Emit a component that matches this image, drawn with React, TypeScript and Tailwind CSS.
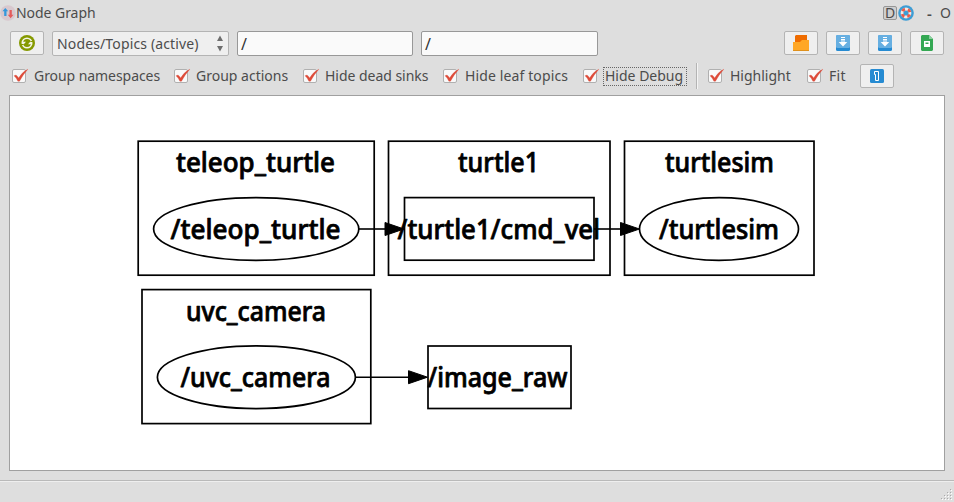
import React from 'react';

const FONT = "font-['Noto_Sans','Open_Sans',sans-serif]";

function Check({ label, width, spacing, focused = false }: { label: string; width: string; spacing: string; focused?: boolean }) {
  return (
    <label className={`relative flex h-[26px] shrink-0 items-center ${width}`}>
      <span className="h-[14px] w-[14px] shrink-0 rounded-[2px] border border-[#b0b0b0] bg-[#f9f9f9]" />
      <svg className="absolute left-0 top-[4px]" width="18" height="18" viewBox="0 0 18 18">
        <path d="M2 8.800 L4 8 Q5.800 9.300 6.600 11 Q10 5 15.800 2.200 Q10.700 8 7.500 14.200 L5.900 14.200 Q4.600 11 2 8.800Z" fill="#dd4b39" stroke="#dd4b39" strokeWidth=".3" />
      </svg>
      <span
        className={`ml-[6px] flex h-[19px] items-center whitespace-nowrap pl-[2px] ${spacing} ${
          focused ? 'w-[84px] outline-1 -outline-offset-1 outline-dotted outline-[#666]' : ''
        }`}
      >
        {label}
      </span>
    </label>
  );
}

function ToolButton({ children }: { children: React.ReactNode }) {
  return (
    <button className="flex h-[24px] w-[34px] shrink-0 items-center justify-center rounded-[2px] border border-[#b4b4b4] bg-[#efefef]">
      {children}
    </button>
  );
}

function SaveIcon() {
  return (
    <svg width="14" height="16" viewBox="0 0 14 16">
      <rect width="14" height="16" rx="1.5" fill="#268bd2" />
      <path d="M0 1.5Q0 0 1.5 0H12.5Q14 0 14 1.5V11.5Q14 13 12.5 13H1.5Q0 13 0 11.5Z" fill="#67afe1" />
      <path d="M5 2h4v1H5zM5 4h4v1.5H5zM5 6.5h4V7h2.3L7 11.5 2.7 7H5z" fill="#fff" />
    </svg>
  );
}

function GraphText({ x, y, width, children }: { x: number; y: number; width: number; children: string }) {
  return (
    <text x={x} y={y} textLength={width} lengthAdjust="spacingAndGlyphs">
      {children}
    </text>
  );
}

function Arrow({ from, to, y }: { from: number; to: number; y: number }) {
  return (
    <g>
      <path d={`M${from} ${y}H${to - 19}`} strokeWidth="1.6" stroke="#000" />
      <path d={`M${to - 19} ${y - 6.5}L${to} ${y}L${to - 19} ${y + 6.5}Z`} fill="#000" stroke="#000" strokeWidth="1" />
    </g>
  );
}

export default function App() {
  return (
    <div className={`flex h-[502px] w-[954px] flex-col overflow-hidden bg-[#dedede] text-[14px] leading-none text-[#4c4c4c] ${FONT}`}>
      <header className="flex h-[26px] shrink-0 items-center">
        <svg width="16" height="16" viewBox="0 0 16 16" className="shrink-0">
          <circle cx="8" cy="8" r="7.8" fill="#d8c8ce" />
          <path d="M5.300 3 8.200 6.200H6.500V11H4.200V6.200H2.400z" fill="#3498db" />
          <path d="M10.600 13.200 7.800 9.800H9.500V5h2.300v4.800h1.700z" fill="#e45b5b" />
        </svg>
        <h1 className="tracking-[-0.05px]">Node Graph</h1>
        <span className="ml-auto flex h-[14px] w-[14px] items-center justify-center rounded-[2px] border border-[#969696] bg-[#cfcfcf] text-[14px]">D</span>
        <svg className="ml-px shrink-0" width="16" height="16" viewBox="0 0 16 16">
          <circle cx="8" cy="8" r="7.8" fill="#3d9dd5" />
          <circle cx="8" cy="8" r="4" fill="none" stroke="#f4e9e6" strokeWidth="2.800" />
          <circle cx="8" cy="8" r="4" fill="none" stroke="#e75b4c" strokeWidth="2.800" strokeDasharray="3.1416 3.1416" strokeDashoffset="-1.5708" />
        </svg>
        <span className="ml-[13px] w-[13px] text-[15px] font-semibold">-</span>
        <span className="w-[14px] text-[14px]">O</span>
      </header>

      <div className="mt-[5px] flex h-[25px] shrink-0 items-start gap-[8px] pl-[10px] pr-[10px]">
        <ToolButton>
          <svg width="16" height="16" viewBox="0 0 16 16">
            <circle cx="8" cy="8" r="8" fill="#859900" />
            <circle cx="8" cy="8" r="4.700" fill="none" stroke="#f4f5e8" strokeWidth="1.600" />
            <path d="M2.500 6.800h4.500L4.600 9.600zM13.500 9.200H9L11.400 6.400z" fill="#f4f5e8" />
            <path d="M2 9.500h2.500M11.500 6.500h2.500" stroke="#859900" strokeWidth="1" />
          </svg>
        </ToolButton>
        <div className="flex h-[25px] w-[177px] shrink-0 items-center rounded-[2px] border border-[#b4b4b4] bg-[#efefef] pl-[4px] pr-[5px]">
          <span className="whitespace-nowrap tracking-[0.14px]">Nodes/Topics (active)</span>
          <svg className="ml-auto shrink-0" width="6" height="17" viewBox="0 0 6 17">
            <path d="M3 .5 6 6H0zM3 16.500 6 11H0z" fill="#6e6e6e" />
          </svg>
        </div>
        <div className="flex h-[25px] w-[176px] shrink-0 items-center rounded-[2px] border border-[#989898] bg-[#fafafa] pl-[3px] text-[16px] text-[#333]">/</div>
        <div className="flex h-[25px] w-[177px] shrink-0 items-center rounded-[2px] border border-[#989898] bg-[#fafafa] pl-[3px] text-[16px] text-[#333]">/</div>
        <div className="ml-auto flex gap-[8px]">
          <ToolButton>
            <svg width="16" height="16" viewBox="0 0 16 16">
              <path d="M3 0H14V8H2V1z" fill="#ef6c00" />
              <path d="M0 7H7L9 5H16V16H0z" fill="#ffa726" />
              <path d="M0 15H16V16H0z" fill="#df911d" />
            </svg>
          </ToolButton>
          <ToolButton><SaveIcon /></ToolButton>
          <ToolButton><SaveIcon /></ToolButton>
          <ToolButton>
            <svg width="12" height="16" viewBox="0 0 12 16">
              <path d="M1 0H8L12 4V15L11 16H1L0 15V1z" fill="#34a853" />
              <path d="M8 0 12 4H8z" fill="#8bd0a0" />
              <path d="M3 6H9V12H3zM4.500 7.500V9H7.500V7.500z" fill="#fff" fillRule="evenodd" />
            </svg>
          </ToolButton>
        </div>
      </div>

      <div className="mt-[7px] flex h-[26px] shrink-0 items-center pl-[12px]">
        <Check label="Group namespaces" width="w-[162px]" spacing="tracking-[-0.06px]" />
        <Check label="Group actions" width="w-[129px]" spacing="" />
        <Check label="Hide dead sinks" width="w-[140px]" spacing="tracking-[-0.03px]" />
        <Check label="Hide leaf topics" width="w-[140px]" spacing="tracking-[0.12px]" />
        <Check label="Hide Debug" width="w-[113px]" spacing="" focused />
        <span className="h-[26px] w-[2px] shrink-0 border-l border-[#b4b4b4] bg-[#f4f4f4]" />
        <span className="w-[10px] shrink-0" />
        <Check label="Highlight" width="w-[99px]" spacing="" />
        <Check label="Fit" width="w-[53px]" spacing="tracking-[0.3px]" />
        <ToolButton>
          <svg width="14" height="14" viewBox="0 0 14 14">
            <rect width="14" height="14" rx="1.500" fill="#268bd2" />
            <path d="M4.500 2.500H8.500V11.500H5.500V5.500H4.500z" fill="none" stroke="#fff" strokeWidth="1" />
          </svg>
        </ToolButton>
      </div>

      <main className="ml-[9px] mt-[6px] h-[376px] w-[936px] shrink-0 border border-[#a0a0a0] bg-white">
        <svg width="934" height="374" viewBox="10 96 934 374">
          <g fill="none" stroke="#000" strokeWidth="1.700">
            <rect x="138.200" y="141.200" width="236" height="134" />
            <rect x="388.500" y="141.200" width="221.500" height="134" />
            <rect x="624.500" y="141.200" width="189.500" height="134" />
            <rect x="142" y="289.600" width="228.800" height="134" />
            <rect x="404.500" y="197.600" width="189.500" height="62.600" />
            <rect x="428" y="346" width="143" height="62.500" />
            <ellipse cx="256.200" cy="229" rx="102.600" ry="31.400" />
            <ellipse cx="719" cy="229" rx="79.500" ry="31.400" />
            <ellipse cx="256.400" cy="377.200" rx="99" ry="31.400" />
          </g>
          <Arrow from={359} to={404} y={229} />
          <Arrow from={594} to={639.5} y={229} />
          <Arrow from={355.5} to={427.5} y={377.2} />
          <g fill="#000" stroke="#000" strokeWidth=".75" strokeLinejoin="round" fontSize="26.500" fontWeight="500">
            <GraphText x={176} y={172} width={159}>teleop_turtle</GraphText>
            <GraphText x={458} y={172} width={81}>turtle1</GraphText>
            <GraphText x={665} y={172} width={109}>turtlesim</GraphText>
            <GraphText x={186} y={320.5} width={140}>uvc_camera</GraphText>
            <GraphText x={170.5} y={239} width={170}>/teleop_turtle</GraphText>
            <GraphText x={397.5} y={239} width={202.5}>/turtle1/cmd_vel</GraphText>
            <GraphText x={659} y={239} width={120}>/turtlesim</GraphText>
            <GraphText x={180.5} y={387.3} width={150}>/uvc_camera</GraphText>
            <GraphText x={427.5} y={387.3} width={140}>/image_raw</GraphText>
          </g>
        </svg>
      </main>

      <footer className="mt-[9px] flex h-[22px] shrink-0 items-end justify-end border-t border-[#b9b9b9] shadow-[inset_0_1px_0_#eeeeee]">
        <svg width="14" height="14" viewBox="0 0 14 14">
          {[[10, 1], [7, 4], [10, 4], [4, 7], [7, 7], [10, 7], [1, 10], [4, 10], [7, 10], [10, 10]].map(([x, y]) => (
            <g key={`${x}-${y}`}>
              <rect x={x + 1} y={y + 1} width="1" height="1" fill="#fff" />
              <rect x={x} y={y} width="1" height="1" fill="#aaa" />
            </g>
          ))}
        </svg>
      </footer>
    </div>
  );
}
